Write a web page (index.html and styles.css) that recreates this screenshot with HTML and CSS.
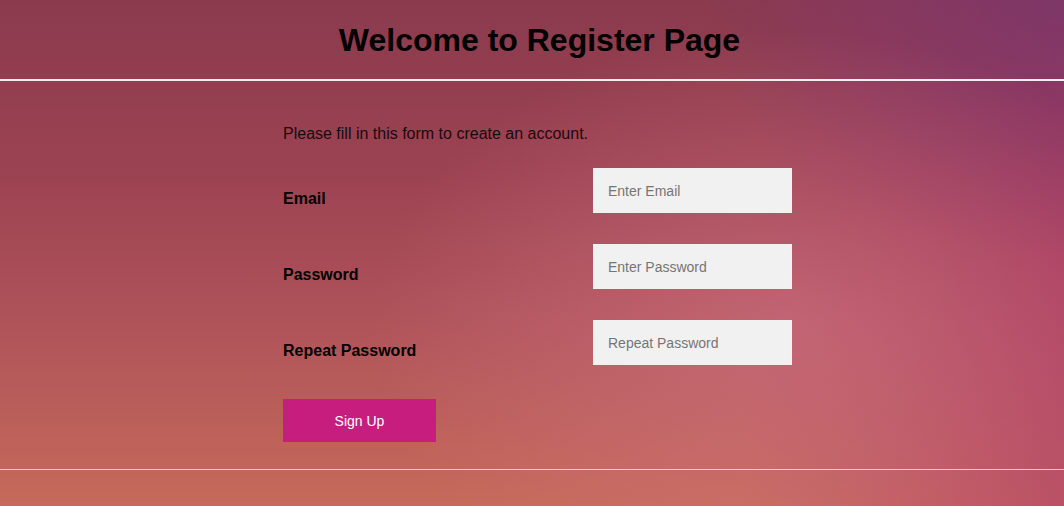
FILE: index.html
```html
<!DOCTYPE html>
<html lang="en">
<head>
<meta charset="utf-8">
<title>Register</title>
<link rel="stylesheet" href="styles.css">
</head>
<body>
<div class="page">
  <header class="header">
    <h1 class="title">Welcome to Register Page</h1>
  </header>
  <form class="form">
    <p class="intro">Please fill in this form to create an account.</p>
    <div class="row">
      <label class="label" for="email">Email</label>
      <input class="field" id="email" type="text" placeholder="Enter Email">
    </div>
    <div class="row">
      <label class="label" for="psw">Password</label>
      <input class="field" id="psw" type="password" placeholder="Enter Password">
    </div>
    <div class="row">
      <label class="label" for="psw2">Repeat Password</label>
      <input class="field" id="psw2" type="password" placeholder="Repeat Password">
    </div>
    <button class="btn" type="button">Sign Up</button>
  </form>
  <div class="footer-line"></div>
</div>
</body>
</html>
```
FILE: styles.css
```css
html, body {
  margin: 0;
  height: 100%;
}
body {
  font-family: "Liberation Sans", Arial, sans-serif;
  color: #000;
  background:
    radial-gradient(ellipse 420px 300px at 790px 330px, rgba(214, 120, 140, 0.5), rgba(214, 120, 140, 0) 100%),
    radial-gradient(ellipse 360px 260px at 1064px 0px, rgba(110, 55, 110, 0.65), rgba(110, 55, 110, 0) 100%),
    linear-gradient(90deg, rgba(0,0,0,0) 70%, rgba(170, 50, 105, 0.5) 100%),
    linear-gradient(180deg, #8b3a4e 0%, #9c4352 35%, #b0545a 65%, #c66a5a 100%);
  overflow: hidden;
}
.page {
  min-height: 506px;
}
.header {
  padding-top: 22px;
  padding-bottom: 21px;
  padding-left: 15px;
  border-bottom: 2px solid #f4eef0;
  text-align: center;
}
.title {
  margin: 0;
  font-size: 32px;
  line-height: 36px;
  font-weight: bold;
}
.form {
  margin-left: 283px;
  width: 509px;
  padding-top: 44px;
}
.intro {
  margin: 0 0 25px;
  font-size: 16px;
  line-height: 18px;
  color: #1a0a0e;
}
.row {
  display: flex;
  justify-content: space-between;
  height: 45px;
  margin-bottom: 31px;
}
.label {
  padding-top: 22px;
  font-size: 16px;
  line-height: 18px;
  font-weight: bold;
}
.field {
  box-sizing: border-box;
  width: 199px;
  height: 45px;
  border: none;
  margin: 0;
  padding: 0 15px;
  background: #f1f1f1;
  font-family: "Liberation Sans", Arial, sans-serif;
  font-size: 14px;
  color: #333;
  outline: none;
}
.field::placeholder {
  color: #757575;
}
.btn {
  display: block;
  margin-top: 34px;
  width: 153px;
  height: 43px;
  border: none;
  background: #c71d7f;
  color: #fff;
  font-family: "Liberation Sans", Arial, sans-serif;
  font-size: 14px;
  font-weight: normal;
  cursor: pointer;
}
.footer-line {
  margin-top: 27px;
  height: 1px;
  background: rgba(255, 235, 235, 0.75);
}
```
